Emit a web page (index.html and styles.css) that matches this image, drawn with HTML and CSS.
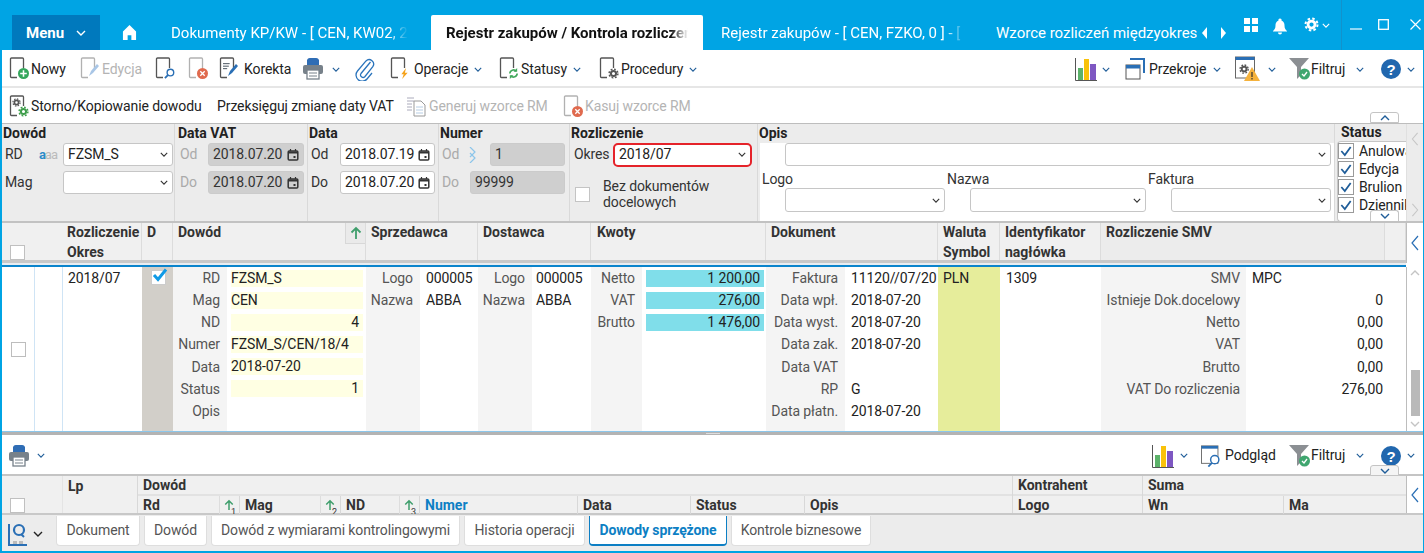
FILE: index.html
```html
<!DOCTYPE html>
<html lang="pl">
<head>
<meta charset="utf-8">
<title>Rejestr zakupów</title>
<link rel="stylesheet" href="styles.css">
</head>
<body>
<svg class="defs" width="0" height="0">
  <symbol id="chev" viewBox="0 0 10 6"><path d="M1 1l4 4 4-4" fill="none" stroke="currentColor" stroke-width="1.4"/></symbol>
  <symbol id="page" viewBox="0 0 20 22"><path d="M8 20.500H2.500a1 1 0 0 1-1-1V2a1 1 0 0 1 1-1h11a1 1 0 0 1 1 1v9" fill="#fff" stroke="#555" stroke-width="1.3"/></symbol>
  <symbol id="printer" viewBox="0 0 22 24"><path d="M5 8V3a3 3 0 0 1 3-2h6a3 3 0 0 1 3 2v5z" fill="#2f6db5"/><rect x="1" y="8" width="20" height="9" rx="2" fill="#77818a"/><rect x="5" y="13" width="12" height="9" fill="#fff" stroke="#77818a" stroke-width="1.3"/><path d="M7 16h8M7 19h8" stroke="#77818a"/></symbol>
  <symbol id="gear" viewBox="0 0 12 12"><circle cx="6" cy="6" r="2.8" fill="none" stroke="currentColor" stroke-width="2.2"/><circle cx="6" cy="6" r="4.8" fill="none" stroke="currentColor" stroke-width="1.6" stroke-dasharray="2 1.77"/></symbol>
  <symbol id="cal" viewBox="0 0 12 12"><rect x="1.2" y="2" width="9.6" height="9" rx="1" fill="none" stroke="#333" stroke-width="1.5"/><path d="M1 3.500h10" stroke="#333" stroke-width="2"/><path d="M3.500 0v2M8.500 0v2" stroke="#333" stroke-width="1.2"/><rect x="6.500" y="7" width="2" height="2" fill="#333"/></symbol>
  <symbol id="chart" viewBox="0 0 22 24"><path d="M.5 1v22.500H22" fill="none" stroke="#555"/><rect x="3" y="11" width="5" height="12" fill="#5cb26a"/><rect x="9" y="2" width="5" height="21" fill="#f9c20a"/><rect x="15" y="7" width="6" height="16" fill="#7e57c2"/></symbol>
  <symbol id="funnel" viewBox="0 0 24 24"><path d="M1 1h20l-8 9v8l-4 4V10z" fill="#8b8f93"/><circle cx="16.500" cy="17" r="5.500" fill="#3fa66f"/><path d="M14 17l2 2 3-4" fill="none" stroke="#fff" stroke-width="1.3"/></symbol>
  <symbol id="help" viewBox="0 0 20 20"><circle cx="10" cy="10" r="10" fill="#2167ae"/><text x="10" y="15.500" text-anchor="middle" font-family="Liberation Sans" font-weight="700" font-size="15" fill="#fff">?</text></symbol>
  <symbol id="up" viewBox="0 0 12 14"><path d="M6 13V2M1.500 6.500L6 2l4.500 4.500" fill="none" stroke="#3f9e6c" stroke-width="1.8"/></symbol>
  <symbol id="left" viewBox="0 0 8 16"><path d="M7 1L1 8l6 7" fill="none" stroke="currentColor" stroke-width="1.2"/></symbol>
</svg>
<div class="app">
  <header class="titlebar">
    <div class="menu">Menu <svg class="c10 white"><use href="#chev"/></svg></div>
    <svg class="home" viewBox="0 0 16 16"><path d="M8 0l7 7v9h-5v-5H6v5H1V7z" fill="#fff"/></svg>
    <div class="ttab t1"><span>Dokumenty KP/KW - [ CEN, KW02, 2018 ]</span></div>
    <div class="ttab t2 active"><span>Rejestr zakupów / Kontrola rozliczeń</span></div>
    <div class="ttab t3"><span>Rejestr zakupów - [ CEN, FZKO, 0 ] - [ 2018 ]</span></div>
    <div class="ttab t4"><span>Wzorce rozliczeń międzyokres</span></div>
    <div class="tarrows"><i class="al"></i><i class="ar"></i></div>
    <svg class="tgrid" viewBox="0 0 14 14"><path d="M0 0h6v6H0zM8 0h6v6H8zM0 8h6v6H0zM8 8h6v6H8z" fill="#fff"/></svg>
    <svg class="tbell" viewBox="0 0 14 16"><path d="M7 0a1.500 1.500 0 0 1 1.500 2C11 3 11.500 5 11.500 7c0 3 1 4 2.500 5.500v.5H0v-.5C1.500 11 2.500 10 2.500 7c0-2 .5-4 3-5A1.500 1.500 0 0 1 7 0zM5 14h4a2 2 0 0 1-4 0z" fill="#fff"/></svg>
    <svg class="tgear white"><use href="#gear"/></svg>
    <svg class="c8 white tgearc"><use href="#chev"/></svg>
    <div class="wctl">
      <svg class="wmin" viewBox="0 0 12 2"><path d="M0 1h12" stroke="#cfeefb" stroke-width="1.400"/></svg>
      <svg class="wmax" viewBox="0 0 11 11"><rect x=".7" y=".7" width="9.600" height="9.600" fill="none" stroke="#fff" stroke-width="1.300"/></svg>
      <svg class="wx" viewBox="0 0 11 11"><path d="M.5.5l10 10M10.500.5l-10 10" stroke="#fff" stroke-width="1.200"/></svg>
    </div>
  </header>

  <nav class="tb tb1">
    <div class="ti w-nowy"><span class="ic"><svg class="pg"><use href="#page"/></svg><svg class="bdg" viewBox="0 0 10 10"><circle cx="5" cy="5" r="5" fill="#35a65c"/><path d="M5 2v6M2 5h6" stroke="#fff" stroke-width="1.400"/></svg></span>Nowy</div>
    <div class="ti w-edy dis"><span class="ic"><svg class="pg"><use href="#page"/></svg><svg class="pen" viewBox="0 0 12 14"><path d="M1 13l2-5 6-7 2 2-6 7z" fill="#a9c6e6"/></svg></span>Edycja</div>
    <div class="ti w-sea"><span class="ic"><svg class="pg"><use href="#page"/></svg><svg class="bdg" viewBox="0 0 12 12"><circle cx="7" cy="5" r="3.600" fill="#fff" stroke="#2a6fb5" stroke-width="1.500"/><path d="M4.500 7.500L1 11" stroke="#2a6fb5" stroke-width="2"/></svg></span></div>
    <div class="ti w-can dis"><span class="ic"><svg class="pg"><use href="#page"/></svg><svg class="bdg" viewBox="0 0 10 10"><circle cx="5" cy="5" r="5" fill="#e06a4e"/><path d="M3 3l4 4M7 3L3 7" stroke="#fff" stroke-width="1.200"/></svg></span></div>
    <div class="ti w-kor"><span class="ic"><svg class="pg"><use href="#page"/></svg><svg class="ln" viewBox="0 0 12 12"><path d="M0 2h8M0 5h7M0 8h5" stroke="#4a5560" stroke-width="1.200"/></svg><svg class="pen" viewBox="0 0 12 14"><path d="M1 13l2-5 6-7 2 2-6 7z" fill="#2a6fb5"/></svg></span>Korekta</div>
    <div class="ti w-pri"><svg class="prn"><use href="#printer"/></svg><svg class="c8 navy"><use href="#chev"/></svg></div>
    <div class="ti w-cli"><svg class="clip" viewBox="0 0 20 24"><path d="M15.500 5L6 16.500a2.500 2.500 0 0 0 3.800 3.200l8-10a4.500 4.500 0 0 0-6.800-5.800L2.500 14a6.200 6.200 0 0 0 9.500 8l5-6" fill="none" stroke="#2a74bc" stroke-width="1.300"/></svg></div>
    <div class="ti w-ope"><span class="ic"><svg class="pg"><use href="#page"/></svg><svg class="bdg" viewBox="0 0 10 14"><path d="M7 0L1 8h3L2 14l7-8H5.500z" fill="#f5a31c"/></svg></span>Operacje<svg class="c8 navy"><use href="#chev"/></svg></div>
    <div class="ti w-sta"><span class="ic"><svg class="pg"><use href="#page"/></svg><svg class="bdg" viewBox="0 0 12 12"><path d="M2 6a4 4 0 0 1 7-2.500M10 6a4 4 0 0 1-7 2.500" fill="none" stroke="#42a85c" stroke-width="1.800"/><path d="M10 0v4H6zM2 12V8h4z" fill="#42a85c"/></svg></span>Statusy<svg class="c8 navy"><use href="#chev"/></svg></div>
    <div class="ti w-pro"><span class="ic"><svg class="pg"><use href="#page"/></svg><svg class="bdg dk"><use href="#gear"/></svg></span>Procedury<svg class="c8 navy"><use href="#chev"/></svg></div>
    <div class="tb-right">
      <div class="ti w-cha"><svg class="chart"><use href="#chart"/></svg><svg class="c8 navy"><use href="#chev"/></svg></div>
      <div class="ti w-prz"><svg class="wins" viewBox="0 0 20 22"><path d="M5 1h14v14" fill="none" stroke="#2a6fb5" stroke-width="2"/><rect x="1" y="7" width="14" height="14" fill="#fff" stroke="#555"/><rect x="1" y="7" width="14" height="3.500" fill="#2a6fb5"/></svg>Przekroje<svg class="c8 navy"><use href="#chev"/></svg></div>
      <div class="ti w-warn"><svg class="wwin" viewBox="0 0 26 26"><rect x=".5" y="1" width="19" height="21" fill="#fff" stroke="#666"/><rect x=".5" y="1" width="19" height="3" fill="#2a6fb5"/><g transform="translate(4 8) scale(.85)" class="dk"><use href="#gear" width="12" height="12"/></g><path d="M17 11l8 14H9z" fill="#f5b23c"/><path d="M17 16v5M17 22v1.500" stroke="#333" stroke-width="1.200"/></svg><svg class="c8 navy"><use href="#chev"/></svg></div>
      <div class="ti w-fil"><svg class="fun"><use href="#funnel"/></svg>Filtruj<svg class="c8 navy"><use href="#chev"/></svg></div>
      <div class="ti w-hel"><svg class="hlp"><use href="#help"/></svg><svg class="c8 navy"><use href="#chev"/></svg></div>
    </div>
  </nav>

  <nav class="tb tb2">
    <div class="ti w-sto"><span class="ic"><svg class="pg"><use href="#page"/></svg><svg class="gr1 dk"><use href="#gear"/></svg><svg class="bdg gn"><use href="#gear"/></svg></span>Storno/Kopiowanie dowodu</div>
    <div class="ti w-prze">Przeksięguj zmianę daty VAT</div>
    <div class="ti w-gen dis"><svg class="gen" viewBox="0 0 20 22"><path d="M1 2h7M1 5h7M1 8h5M1 11h5M1 14h5" stroke="#aab" /><path d="M8 5h7l4 4v11H8z" fill="#fff" stroke="#999"/><path d="M10 11h7M10 14h7M10 17h7" stroke="#b6cde4"/></svg>Generuj wzorce RM</div>
    <div class="ti w-kas dis"><span class="ic"><svg class="pg"><use href="#page"/></svg><svg class="bdg" viewBox="0 0 10 10"><circle cx="5" cy="5" r="5" fill="#e06a4e"/><path d="M3 3l4 4M7 3L3 7" stroke="#fff" stroke-width="1.200"/></svg></span>Kasuj wzorce RM</div>
    <div class="fold fold-up"><svg class="c10 navy"><use href="#chev"/></svg></div>
  </nav>

  <section class="filters">
    <div class="fg g-dow">
      <b>Dowód</b>
      <div class="fr"><span class="lb grow">RD</span><span class="aa"><em>a</em>aa</span><div class="sel s-dow">FZSM_S<svg class="c8"><use href="#chev"/></svg></div></div>
      <div class="fr"><span class="lb grow">Mag</span><div class="sel s-dow"><svg class="c8"><use href="#chev"/></svg></div></div>
    </div>
    <div class="fg g-vat">
      <b>Data VAT</b>
      <div class="fr"><span class="lb off w-od">Od</span><div class="sel date ro">2018.07.20<svg class="c10cal"><use href="#cal"/></svg></div></div>
      <div class="fr"><span class="lb off w-od">Do</span><div class="sel date ro">2018.07.20<svg class="c10cal"><use href="#cal"/></svg></div></div>
    </div>
    <div class="fg g-dat">
      <b>Data</b>
      <div class="fr"><span class="lb w-od2">Od</span><div class="sel date">2018.07.19<svg class="c10cal"><use href="#cal"/></svg></div></div>
      <div class="fr"><span class="lb w-od2">Do</span><div class="sel date">2018.07.20<svg class="c10cal"><use href="#cal"/></svg></div></div>
    </div>
    <div class="fg g-num">
      <b>Numer</b>
      <div class="fr"><span class="lb off grow">Od</span><svg class="dbl" viewBox="0 0 8 16"><path d="M1 0l5 5-5 5M1 6l5 5-5 5" fill="none" stroke="#8cc5ea" stroke-width="1.200"/></svg><div class="sel ro n1">1</div></div>
      <div class="fr"><span class="lb off grow">Do</span><div class="sel ro n2">99999</div></div>
    </div>
    <div class="fg g-roz">
      <b>Rozliczenie</b>
      <div class="fr"><span class="lb grow">Okres</span><div class="sel s-okr">2018/07<svg class="c8"><use href="#chev"/></svg></div></div>
      <div class="fcheck"><span class="cb"></span><span class="cbt">Bez dokumentów docelowych</span></div>
    </div>
    <div class="fg g-opi">
      <b>Opis</b>
      <div class="opis-panel">
        <div class="fr op1"><div class="sel s-opi"><svg class="c8"><use href="#chev"/></svg></div></div>
        <div class="op-labels"><span>Logo</span><span>Nazwa</span><span>Faktura</span></div>
        <div class="op-row">
          <div class="sel s-a"><svg class="c8"><use href="#chev"/></svg></div>
          <div class="sel s-b"><svg class="c8"><use href="#chev"/></svg></div>
          <div class="sel s-a"><svg class="c8"><use href="#chev"/></svg></div>
        </div>
      </div>
    </div>
    <div class="fg g-sta">
      <b>Status</b>
      <div class="st-list">
        <div class="st"><span class="cb2"><svg viewBox="0 0 12 12"><path d="M2 6l3 3.500L10 2.500" fill="none" stroke="#1f5d99" stroke-width="1.500"/></svg></span>Anulowany</div>
        <div class="st"><span class="cb2"><svg viewBox="0 0 12 12"><path d="M2 6l3 3.500L10 2.500" fill="none" stroke="#1f5d99" stroke-width="1.500"/></svg></span>Edycja</div>
        <div class="st"><span class="cb2"><svg viewBox="0 0 12 12"><path d="M2 6l3 3.500L10 2.500" fill="none" stroke="#1f5d99" stroke-width="1.500"/></svg></span>Brulion</div>
        <div class="st"><span class="cb2"><svg viewBox="0 0 12 12"><path d="M2 6l3 3.500L10 2.500" fill="none" stroke="#1f5d99" stroke-width="1.500"/></svg></span>Dziennik</div>
      </div>
    </div>
    <div class="f-side"><svg class="side-a"><use href="#left"/></svg><svg class="side-a flip"><use href="#left"/></svg></div>
    <div class="fold fold-down"><svg class="c10 navy"><use href="#chev"/></svg></div>
  </section>

  <section class="ghead">
    <div class="gh"><span class="hcb"></span></div>
    <div class="gh nb"></div>
    <div class="gh"><b>Rozliczenie</b><b>Okres</b></div>
    <div class="gh"><b>D</b></div>
    <div class="gh hsort"><b>Dowód</b><span class="sortb"><svg><use href="#up"/></svg></span></div>
    <div class="gh"><b>Sprzedawca</b></div>
    <div class="gh"><b>Dostawca</b></div>
    <div class="gh h-kwo"><b>Kwoty</b></div>
    <div class="gh"><b>Dokument</b></div>
    <div class="gh"><b>Waluta</b><b>Symbol</b></div>
    <div class="gh"><b>Identyfikator</b><b>nagłówka</b></div>
    <div class="gh smv"><b>Rozliczenie SMV</b></div>
    <div class="gh"></div>
    <div class="gside"><svg class="gleft"><use href="#left"/></svg></div>
  </section>

  <div class="gbar"></div>

  <section class="gbody">
    <div class="gc c-cb"><span class="rcb"></span></div>
    <div class="gc c-e"></div>
    <div class="gc c-okr">2018/07</div>
    <div class="gc c-d"><span class="dcb"><svg viewBox="0 0 16 14"><path d="M2 7l4 4.500L14 1.500" fill="none" stroke="#0f9ae6" stroke-width="3"/></svg></span></div>
    <div class="gc pair p-dow">
      <div class="lbs"><span>RD</span><span>Mag</span><span>ND</span><span>Numer</span><span>Data</span><span>Status</span><span>Opis</span></div>
      <div class="vals yel"><span>FZSM_S</span><span>CEN</span><span class="r">4</span><span>FZSM_S/CEN/18/4</span><span>2018-07-20</span><span class="r">1</span></div>
    </div>
    <div class="gc pair p-spr">
      <div class="lbs"><span>Logo</span><span>Nazwa</span></div>
      <div class="vals"><span>000005</span><span>ABBA</span></div>
    </div>
    <div class="gc pair p-dos">
      <div class="lbs"><span>Logo</span><span>Nazwa</span></div>
      <div class="vals"><span>000005</span><span>ABBA</span></div>
    </div>
    <div class="gc pair p-kwo">
      <div class="lbs"><span>Netto</span><span>VAT</span><span>Brutto</span></div>
      <div class="vals cyan"><span class="r">1 200,00</span><span class="r">276,00</span><span class="r">1 476,00</span></div>
    </div>
    <div class="gc pair p-dok">
      <div class="lbs"><span>Faktura</span><span>Data wpł.</span><span>Data wyst.</span><span>Data zak.</span><span>Data VAT</span><span>RP</span><span>Data płatn.</span></div>
      <div class="vals"><span>11120//07/20</span><span>2018-07-20</span><span>2018-07-20</span><span>2018-07-20</span><span></span><span>G</span><span>2018-07-20</span></div>
    </div>
    <div class="gc c-wal">PLN</div>
    <div class="gc c-idn">1309</div>
    <div class="gc pair p-smv">
      <div class="lbs"><span>SMV</span><span>Istnieje Dok.docelowy</span><span>Netto</span><span>VAT</span><span>Brutto</span><span>VAT Do rozliczenia</span></div>
      <div class="vals"><span>MPC</span><span class="r">0</span><span class="r">0,00</span><span class="r">0,00</span><span class="r">0,00</span><span class="r">276,00</span></div>
    </div>
    <div class="scroll">
      <svg class="c10 sgray"><use href="#chev"/></svg>
      <div class="thumb"></div>
      <svg class="c10 sgray"><use href="#chev"/></svg>
    </div>
  </section>

  <div class="split"><i></i></div>

  <nav class="tb tb3">
    <div class="ti w-pri2"><svg class="prn"><use href="#printer"/></svg><svg class="c8 navy"><use href="#chev"/></svg></div>
    <div class="tb-right">
      <div class="ti w-cha2"><svg class="chart"><use href="#chart"/></svg><svg class="c8 navy"><use href="#chev"/></svg></div>
      <div class="ti w-pod"><svg class="wwin2" viewBox="0 0 24 24"><rect x=".5" y="1" width="18" height="19" fill="#fff" stroke="#666"/><rect x=".5" y="1" width="18" height="3" fill="#2a6fb5"/><circle cx="15" cy="16" r="4.500" fill="#fff" stroke="#2a6fb5" stroke-width="1.600"/><path d="M12 19.500L8 23.500" stroke="#2a6fb5" stroke-width="2"/></svg>Podgląd</div>
      <div class="ti w-fil2"><svg class="fun"><use href="#funnel"/></svg>Filtruj<svg class="c8 navy"><use href="#chev"/></svg></div>
      <div class="ti w-hel"><svg class="hlp"><use href="#help"/></svg><svg class="c8 navy"><use href="#chev"/></svg></div>
    </div>
    <div class="fold fold-low"><svg class="c10 navy"><use href="#chev"/></svg></div>
  </nav>

  <section class="lhead">
    <div class="lcb"><span class="hcb"></span></div>
    <div class="llp"><b>Lp</b></div>
    <div class="ldow">
      <div class="ltop"><b>Dowód</b></div>
      <div class="lsub">
        <div class="lc l-rd"><b>Rd</b><span class="sarrow"><svg><use href="#up"/></svg><small>1</small></span></div>
        <div class="lc l-mag"><b>Mag</b><span class="sarrow"><svg><use href="#up"/></svg><small>2</small></span></div>
        <div class="lc l-nd"><b>ND</b><span class="sarrow"><svg><use href="#up"/></svg><small>3</small></span></div>
        <div class="lc l-num"><b class="blue">Numer</b></div>
        <div class="lc l-dat"><b>Data</b></div>
        <div class="lc l-sta"><b>Status</b></div>
        <div class="lc l-opi"><b>Opis</b></div>
      </div>
    </div>
    <div class="lkon"><div class="ltop"><b>Kontrahent</b></div><div class="lsub"><div class="lc"><b>Logo</b></div></div></div>
    <div class="lsum"><div class="ltop"><b>Suma</b></div><div class="lsub"><div class="lc l-wn"><b>Wn</b></div><div class="lc"><b>Ma</b></div></div></div>
    <div class="gside"><svg class="gleft"><use href="#left"/></svg></div>
  </section>

  <footer class="tabs">
    <div class="tview"><svg class="tv" viewBox="0 0 20 24"><path d="M1 2v21h18" fill="none" stroke="#2a6fb5" stroke-width="2"/><circle cx="11" cy="8" r="5" fill="none" stroke="#2a6fb5" stroke-width="2.200"/><path d="M13 12l3 3" stroke="#2a6fb5" stroke-width="2"/><path d="M5 19h4v3H5zM11 19h4v3h-4z" fill="#bbb"/></svg><svg class="c10 blk"><use href="#chev"/></svg></div>
    <div class="tab w1">Dokument</div>
    <div class="tab w2">Dowód</div>
    <div class="tab w3">Dowód z wymiarami kontrolingowymi</div>
    <div class="tab w4">Historia operacji</div>
    <div class="tab w5 on">Dowody sprzężone</div>
    <div class="tab w6">Kontrole biznesowe</div>
  </footer>
</div>
</body>
</html>
```
FILE: styles.css
```css
* { box-sizing: border-box; }
html, body { margin: 0; padding: 0; }
body { font: 14px/1.2 Roboto, "Liberation Sans", sans-serif; letter-spacing: -0.1px; color: #222; background: #fff; }
b { font-weight: 700; letter-spacing: 0; }
svg { display: block; flex: none; }
.defs { position: absolute; }
.app { width: 1424px; height: 553px; overflow: hidden; display: flex; flex-direction: column; border-left: 2px solid #00a4e4; border-right: 1px solid #00a4e4; border-bottom: 2px solid #00a4e4; background: #fff; }

.c10 { width: 10px; height: 6px; }
.c8 { width: 8px; height: 5px; color: #333; }
.white { color: #fff; }
.navy { color: #1f5d99; }
.blk { color: #222; }
.sgray { color: #c4c4c4; }

/* title bar */
.titlebar { height: 50px; flex: none; margin-left: -2px; margin-right: -1px; background: #00a4e4; color: #fff; font-size: 15px; letter-spacing: 0; display: flex; align-items: flex-end; position: relative; }
.menu { width: 88px; height: 35px; margin-left: 12px; background: #0079bd; font-weight: 700; display: flex; align-items: center; padding-left: 14px; gap: 12px; }
.home { width: 15px; height: 15px; margin: 0 0 10px 22px; }
.ttab { height: 35px; display: flex; align-items: center; white-space: nowrap; overflow: hidden; }
.ttab span { display: block; overflow: hidden; }
.t1 { margin-left: 34px; width: 237px; }
.t1 span { width: 237px; -webkit-mask-image: linear-gradient(90deg, #000 92%, transparent); mask-image: linear-gradient(90deg, #000 92%, transparent); }
.t2 { margin-left: 23px; width: 272px; background: #fff; color: #111; font-weight: 700; padding: 0 15px; border-radius: 2px 2px 0 0; }
.t2 span { width: 242px; -webkit-mask-image: linear-gradient(90deg, #000 93%, transparent); mask-image: linear-gradient(90deg, #000 93%, transparent); }
.t3 { margin-left: 18px; width: 244px; }
.t3 span { width: 244px; -webkit-mask-image: linear-gradient(90deg, #000 92%, transparent); mask-image: linear-gradient(90deg, #000 92%, transparent); }
.t4 { margin-left: 31px; width: 201px; }
.tarrows { width: 44px; height: 35px; display: flex; align-items: center; gap: 14px; padding-left: 5px; }
.al, .ar { display: block; width: 0; height: 0; border-style: solid; border-width: 6px 0; border-color: transparent; }
.al { border-right: 5px solid #fff; }
.ar { border-left: 5px solid #fff; }
.tgrid { width: 14px; height: 14px; position: absolute; left: 1244px; top: 18px; }
.tbell { width: 14px; height: 17px; position: absolute; left: 1273px; top: 18px; }
.tgear { width: 15px; height: 15px; position: absolute; left: 1304px; top: 17px; }
.tgearc { position: absolute; left: 1322px; top: 23px; color: #fff; }
.wctl { position: absolute; left: 1341px; top: 0; width: 83px; height: 50px; border-left: 1px solid #1292cc; }
.wmin { position: absolute; left: 8px; top: 28px; width: 12px; height: 2px; }
.wmax { position: absolute; left: 36px; top: 19px; width: 11px; height: 11px; }
.wx { position: absolute; left: 68px; top: 19px; width: 11px; height: 11px; }

/* toolbars */
.tb { display: flex; align-items: center; flex: none; position: relative; padding-left: 7px; }
.tb1 { height: 38px; padding-top: 2px; border-bottom: 2px solid #e6e6e6; }
.tb2 { height: 35px; padding-top: 2px; }
.tb3 { height: 41px; padding: 2px 0 0 6px; border-bottom: 2px solid #c4c4c4; }
.ti { display: flex; align-items: center; white-space: nowrap; flex: none; }
.tb-right { margin-left: auto; display: flex; align-items: center; }
.dis { color: #b4b4b4; }
.ic { position: relative; display: block; width: 22px; height: 24px; flex: none; }
.pg { width: 20px; height: 22px; position: absolute; left: 0; top: 0; }
.dis .pg { opacity: .45; }
.bdg { width: 11px; height: 11px; position: absolute; left: 9px; top: 11px; }
.pen { width: 12px; height: 14px; position: absolute; left: 8px; top: 6px; }
.ln { width: 10px; height: 10px; position: absolute; left: 4px; top: 5px; }
.dk { color: #555; }
.gn { color: #3f9e4c; }
.gr1 { width: 9px; height: 9px; position: absolute; left: 3px; top: 3px; }
.w-nowy { width: 71px; }
.w-edy { width: 75px; }
.w-sea { width: 33px; }
.w-can { width: 31px; }
.w-kor { width: 83px; }
.w-kor .ic { margin-right: 3px; }
.w-pri { width: 53px; gap: 8px; }
.w-cli { width: 35px; }
.w-ope { width: 109px; }
.w-ope .ic { margin-right: 2px; }
.w-ope .c8, .w-sta .c8, .w-pro .c8 { margin-left: 6px; }
.w-sta { width: 100px; }
.w-pro { width: 100px; }
.prn { width: 22px; height: 24px; }
.clip { width: 20px; height: 24px; }
.chart { width: 22px; height: 24px; }
.w-cha { width: 50px; gap: 5px; }
.wins { width: 20px; height: 22px; margin-right: 4px; }
.w-prz { width: 110px; }
.w-prz .c8 { margin-left: 7px; }
.wwin { width: 26px; height: 26px; }
.w-warn { width: 53px; gap: 7px; }
.fun { width: 24px; height: 24px; margin-right: -1px; }
.w-fil { width: 93px; }
.w-fil .c8, .w-fil2 .c8 { margin-left: 11px; }
.hlp { width: 20px; height: 20px; }
.w-hel { width: 42px; gap: 6px; }
.w-sto { width: 208px; }
.w-prze { width: 189px; }
.w-gen { width: 157px; }
.gen { width: 20px; height: 22px; margin-right: 3px; }
.w-kas { width: 130px; }
.fold { position: absolute; width: 29px; height: 11px; background: #f4f4f4; border: 1px solid #c4c4c4; border-radius: 3px 3px 0 0; display: flex; align-items: center; justify-content: center; z-index: 2; }
.fold-up { left: 1368px; top: 24px; background: #fff; }
.fold-up svg { transform: rotate(180deg); }
.fold-down { left: 1368px; bottom: 0; border-bottom: 0; background: #fff; }
.fold-low { left: 1368px; bottom: -2px; background: #f4f4f4; }
.w-pri2 { width: 60px; gap: 7px; }
.w-cha2 { width: 49px; gap: 6px; }
.w-pod { width: 87px; }
.wwin2 { width: 22px; height: 22px; margin-right: 2px; }
.w-fil2 { width: 93px; }

/* filter panel */
.filters { height: 100px; flex: none; display: flex; background: #ececec; border-top: 1px solid #bdbdbd; border-bottom: 2px solid #c2c2c2; position: relative; }
.fg { flex: none; border-right: 1px solid #d9d9d9; }
.fg > b { display: block; height: 19px; line-height: 18px; padding-left: 1px; color: #222; }
.fr { display: flex; align-items: center; height: 23px; margin-bottom: 5px; }
.lb { color: #333; }
.off { color: #aaa; }
.grow { flex: 1; }
.g-dow { width: 173px; padding-right: 1px; }
.g-dow .lb { padding-left: 3px; }
.aa { font-size: 13px; color: #bbb; margin-right: 6px; letter-spacing: -1px; }
.aa em { font-style: normal; font-weight: 700; color: #2a8bc9; }
.sel { height: 23px; background: #fff; border: 1px solid #c6c6c6; border-radius: 3px; display: flex; align-items: center; justify-content: space-between; padding: 0 4px; white-space: nowrap; flex: none; }
.sel .c8 { margin-left: auto; }
.s-dow { width: 110px; }
.g-vat { width: 133px; padding-left: 1px; }
.g-vat > b { padding-left: 2px; }
.g-vat .lb { padding-left: 4px; }
.w-od { width: 32px; }
.date { width: 96px; padding: 0 4px; }
.ro { background: #cfcfcf; border-color: #cbcbcb; color: #333; }
.c10cal { width: 12px; height: 12px; }
.g-dat { width: 131px; }
.g-dat .lb { padding-left: 3px; }
.w-od2 { width: 32px; }
.g-dat .date { width: 95px; }
.g-num { width: 131px; padding-right: 4px; }
.g-num .lb { padding-left: 3px; }
.dbl { width: 8px; height: 16px; margin-right: 13px; }
.n1 { width: 75px; }
.n2 { width: 95px; }
.g-roz { width: 188px; padding-right: 5px; }
.g-roz .lb { padding-left: 4px; }
.s-okr { width: 139px; height: 24px; border: 2px solid #e5232a; border-radius: 5px; }
.fcheck { display: flex; align-items: center; margin-top: 12px; padding-left: 5px; }
.cb { width: 15px; height: 15px; background: #fff; border: 1px solid #c4c4c4; flex: none; margin-right: 13px; }
.cbt { width: 130px; line-height: 16px; color: #333; }
.g-opi { width: 577px; }
.opis-panel { height: 78px; margin-left: 2px; background: #fff; }
.op1 { padding-left: 25px; height: 23px; margin-bottom: 0; }
.s-opi { width: 546px; }
.op-labels { display: flex; height: 22px; align-items: center; padding: 5px 0 0 2px; color: #333; }
.op-labels span:nth-child(1) { width: 185px; }
.op-labels span:nth-child(2) { width: 201px; }
.op-row { display: flex; gap: 25px; padding-left: 25px; }
.s-a { width: 160px; height: 24px; }
.s-b { width: 176px; height: 24px; }
.g-sta { width: 71px; border: 0; overflow: hidden; }
.g-sta > b { height: 17px; padding-left: 6px; line-height: 17px; }
.st-list { height: 81px; margin-left: 2px; width: 72px; background: #fff; border: 1px solid #c6c6c6; border-right: 0; border-radius: 4px 0 0 4px; }
.st { height: 18px; display: flex; align-items: center; white-space: nowrap; }
.cb2 { width: 16px; height: 16px; border: 1px solid #9a9a9a; background: #fff; margin-right: 5px; flex: none; }
.cb2 svg { width: 14px; height: 14px; }
.f-side { width: 17px; flex: none; border-left: 1px solid #e0e0e0; display: flex; flex-direction: column; justify-content: space-between; padding: 8px 0 4px 4px; }
.side-a { width: 8px; height: 14px; color: #c6c6c6; }
.flip { transform: scaleX(-1); }

/* main grid head */
.ghead { height: 37px; flex: none; display: grid; grid-template-columns: 32px 28px 80px 31px 193px 112px 113px 175px 172px 62px 101px 284px 21px 17px; background: #f0f0f0; }
.gh { border-right: 1px solid #dcdcdc; padding: 0 4px 0 5px; display: flex; flex-direction: column; gap: 0; }
.gh b { height: 20px; line-height: 18px; color: #333; white-space: nowrap; }
.gh.nb { border-right: 0; padding: 0; }
.gh.smv { background: #ececec; }
.h-kwo { padding-left: 6px; }
.gh:first-child { border-right: 0; padding: 22px 0 0 8px; }
.hsort { flex-direction: row; justify-content: space-between; padding-right: 0; }
.hcb { display: block; width: 15px; height: 15px; background: #fff; border: 1px solid #c0c0c0; }
.sortb { width: 20px; height: 21px; background: #eaeaea; border: solid #d8d8d8; border-width: 0 0 1px 1px; display: flex; align-items: center; justify-content: center; }
.sortb svg { width: 12px; height: 14px; }
.gside { border-left: 1px solid #bdbdbd; background: #fff; display: flex; align-items: center; justify-content: center; color: #2a6fb5; }
.gleft { width: 8px; height: 16px; }
.gbar { height: 7px; flex: none; width: 1404px; background: linear-gradient(#c8c8c8 0 3px, #e8edf2 3px 5px, #0a84cc 5px); }

/* main grid body */
.gbody { height: 165px; flex: none; display: grid; grid-template-columns: 32px 28px 80px 31px 193px 112px 113px 175px 172px 62px 101px 305px 17px; border-bottom: 1px solid #8cc6ea; }
.gc { min-width: 0; }
.c-cb { box-shadow: 1px 0 #cfe4f5; display: flex; align-items: center; padding-left: 9px; }
.c-e { box-shadow: 1px 0 #cfe4f5; }
.c-okr { padding: 3px 0 0 6px; }
.c-d { background: #d2cfc9; padding: 3px 0 0 9px; }
.rcb { display: block; width: 15px; height: 15px; background: #fff; border: 1px solid #bdbdbd; }
.dcb { display: block; width: 15px; height: 15px; background: #fff; border: 1px solid #ccc; }
.dcb svg { width: 16px; height: 14px; margin: -3px 0 0 0; }
.pair { display: flex; }
.lbs { background: #f4f4f4; color: #555; padding-right: 7px; display: flex; flex-direction: column; text-align: right; flex: none; }
.lbs span, .vals span { display: block; height: 22.170px; line-height: 22.170px; white-space: nowrap; }
.vals { flex: 1; min-width: 0; padding: 0 6px; display: flex; flex-direction: column; overflow: hidden; }
.r { text-align: right; }
.p-dow .lbs { width: 54px; }
.p-spr .lbs, .p-dos .lbs { width: 54px; }
.p-dos .vals { padding-left: 4px; }
.p-kwo .lbs { width: 51px; }
.p-dok .lbs { width: 79px; }
.p-smv .lbs { width: 145px; padding-right: 6px; }
.p-smv .vals { padding-right: 23px; }
.vals.yel, .vals.cyan { padding: 3px 3px 0 4px; gap: 5px; }
.vals.yel span, .vals.cyan span { height: 17px; line-height: 17px; background: #ffffe3; }
.vals.yel .r { padding-right: 4px; }
.vals.cyan { padding-left: 4px; padding-right: 2px; }
.vals.cyan span { background: #80deea; padding-right: 4px; }
.c-wal { background: #e6ed9b; padding: 0 5px; line-height: 22px; }
.c-idn { padding: 0 6px; line-height: 22px; }
.scroll { border-left: 1px solid #bdbdbd; display: flex; flex-direction: column; align-items: center; }
.scroll .sgray:first-child { transform: rotate(180deg); margin-top: 3px; }
.thumb { width: 9px; height: 46px; background: #b9b9b9; margin-top: 94px; }
.scroll .sgray:last-child { margin-top: 5px; }
.split { height: 3px; flex: none; background: #b3b3b3; display: flex; justify-content: center; }
.split i { display: block; width: 14px; height: 1px; margin-top: 1px; background: #ddd; }

/* lower grid head */
.lhead { height: 39px; flex: none; display: flex; background: #f0f0f0; border-bottom: 2px solid #c8c8c8; }
.lhead b { color: #333; white-space: nowrap; }
.lcb { width: 60px; padding: 22px 0 0 8px; flex: none; }
.llp { width: 76px; flex: none; padding: 2px 0 0 5px; border-left: 1px solid #e4e4e4; border-right: 1px solid #d8d8d8; }
.ldow { width: 874px; flex: none; }
.lkon { width: 130px; flex: none; border-left: 1px solid #d8d8d8; }
.lsum { flex: 1; border-left: 1px solid #d8d8d8; }
.ltop { height: 20px; line-height: 19px; padding-left: 5px; border-bottom: 2px solid #e2e2e2; }
.lsub { display: flex; height: 18px; }
.lc { position: relative; padding-left: 5px; line-height: 18px; border-right: 1px solid #d8d8d8; height: 18px; overflow: hidden; flex: 1; }
.lc:last-child { border-right: 0; }
.lc .blue { color: #0d7fc4; }
.l-rd { flex: none; width: 102px; }
.l-mag { flex: none; width: 101px; }
.l-nd { flex: none; width: 79px; }
.l-num { flex: none; width: 158px; }
.l-dat { flex: none; width: 113px; }
.l-sta { flex: none; width: 114px; }
.l-opi { flex: none; width: 208px; }
.l-wn { flex: none; width: 141px; }
.lhead .gside { width: 17px; flex: none; }
.sarrow { position: absolute; right: 0; top: 0; width: 20px; height: 18px; border-left: 1px solid #ddd; }
.sarrow svg { width: 10px; height: 14px; margin: 2px 0 0 4px; }
.sarrow small { position: absolute; right: 3px; bottom: -3px; font-size: 9px; line-height: 10px; color: #333; }

/* tabs */
.tabs { flex: 1; display: flex; align-items: flex-start; background: #ececec; padding-top: 1px; }
.tview { width: 54px; flex: none; display: flex; align-items: center; gap: 5px; padding: 6px 0 0 6px; }
.tv { width: 20px; height: 24px; }
.tab { height: 30px; background: #fff; color: #555; border: 1px solid #dedede; border-top: 0; border-radius: 0 0 4px 4px; display: flex; align-items: center; justify-content: center; white-space: nowrap; flex: none; margin-right: 4px; }
.w1 { width: 84px; }
.w2 { width: 63px; }
.w3 { width: 249px; }
.w4 { width: 121px; }
.w5 { width: 138px; }
.w6 { width: 140px; }
.on { color: #0d7fc4; font-weight: 700; border: solid #0d7fc4; border-width: 0 1px 2px 1px; }
```
